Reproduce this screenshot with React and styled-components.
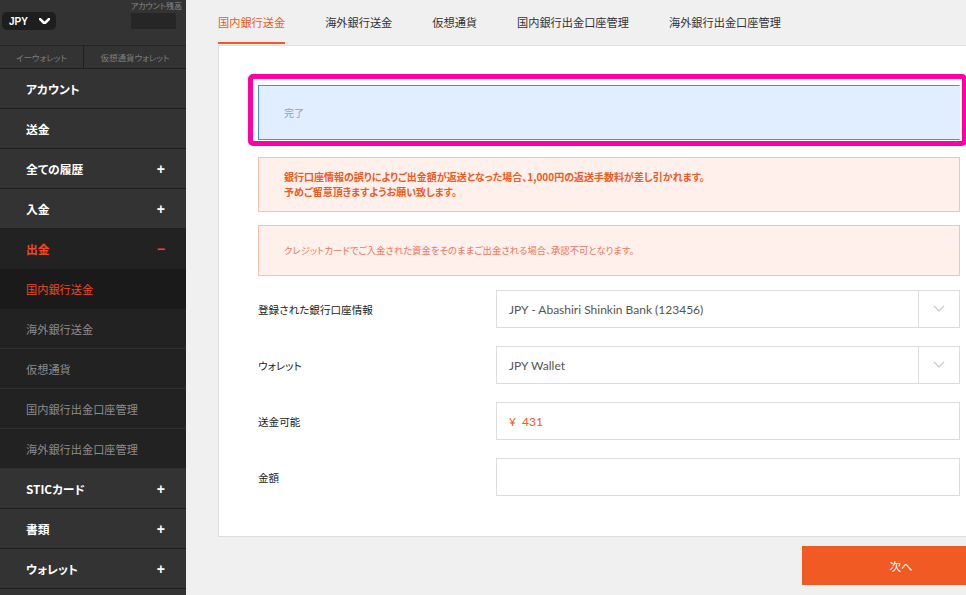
import React from 'react';
import styled, { createGlobalStyle } from 'styled-components';

const GlobalStyle = createGlobalStyle`
	html, body {
		margin: 0;
		padding: 0;
		overflow: hidden;
		background: #f0f0f0;
	}
	body {
		font-family: "Noto Sans CJK JP", "Noto Sans", sans-serif;
		font-feature-settings: "palt";
	}
`;

const menu = [
	{ label: 'アカウント' },
	{ label: '送金' },
	{ label: '全ての履歴', sign: '+' },
	{ label: '入金', sign: '+' },
	{ label: '出金', sign: '−', open: true },
];

const subMenu = [ '国内銀行送金', '海外銀行送金', '仮想通貨', '国内銀行出金口座管理', '海外銀行出金口座管理' ];

const menuBottom = [
	{ label: 'STICカード', sign: '+' },
	{ label: '書類', sign: '+' },
	{ label: 'ウォレット', sign: '+' },
	{ label: '' },
];

const tabs = [ '国内銀行送金', '海外銀行送金', '仮想通貨', '国内銀行出金口座管理', '海外銀行出金口座管理' ];

const Chevron = ({ size = 10, color = '#fff', width = 2 }) => (
	<svg width={size} height={size * 0.6} viewBox="0 0 10 6" fill="none">
		<path d="M1 1l4 4 4-4" stroke={color} strokeWidth={width} strokeLinecap="round" strokeLinejoin="round" />
	</svg>
);

export default function App() {
	return (
		<Page>
			<GlobalStyle />
			<Sidebar>
				<SideTop>
					<CurrencyPill>
						JPY
						<Chevron size={11} width={2.4} />
					</CurrencyPill>
					<Balance>
						<span>アカウント残高</span>
						<BalanceBox />
					</Balance>
				</SideTop>
				<WalletTabs>
					<WalletTab first>イーウォレット</WalletTab>
					<WalletTab>仮想通貨ウォレット</WalletTab>
				</WalletTabs>
				{menu.map((item) => (
					<MenuItem key={item.label} open={item.open}>
						{item.label}
						{item.sign && <Sign open={item.open}>{item.sign}</Sign>}
					</MenuItem>
				))}
				{subMenu.map((label, index) => (
					<SubItem key={label} active={index === 0}>
						{label}
					</SubItem>
				))}
				{menuBottom.map((item, index) => (
					<MenuItem key={index}>
						{item.label}
						{item.sign && <Sign>{item.sign}</Sign>}
					</MenuItem>
				))}
			</Sidebar>

			<Main>
				<TabBar>
					{tabs.map((tab, index) => (
						<Tab key={tab} active={index === 0}>
							{tab}
						</Tab>
					))}
				</TabBar>
				<Card>
					<Highlight>
						<SuccessAlert>完了</SuccessAlert>
					</Highlight>
					<Notice bold>
						銀行口座情報の誤りによりご出金額が返送となった場合、1,000円の返送手数料が差し引かれます。
						<br />
						予めご留意頂きますようお願い致します。
					</Notice>
					<Notice tall>クレジットカードでご入金された資金をそのままご出金される場合、承認不可となります。</Notice>
					<Form>
						<FieldRow>
							<Label>登録された銀行口座情報</Label>
							<Select>
								<span>JPY - Abashiri Shinkin Bank (123456)</span>
								<SelectArrow>
									<Chevron size={12} color="#c8c8c8" width={1} />
								</SelectArrow>
							</Select>
						</FieldRow>
						<FieldRow>
							<Label>ウォレット</Label>
							<Select>
								<span>JPY Wallet</span>
								<SelectArrow>
									<Chevron size={12} color="#c8c8c8" width={1} />
								</SelectArrow>
							</Select>
						</FieldRow>
						<FieldRow>
							<Label>送金可能</Label>
							<Input accent>¥&nbsp;&nbsp;431</Input>
						</FieldRow>
						<FieldRow>
							<Label>金額</Label>
							<Input />
						</FieldRow>
					</Form>
				</Card>
				<Footer>
					<NextButton>次へ</NextButton>
				</Footer>
			</Main>
		</Page>
	);
}

const Page = styled.div`
	display: flex;
	width: 1000px;
	height: 595px;
	background: #f0f0f0;
`;

const Sidebar = styled.aside`
	width: 186px;
	flex-shrink: 0;
	background: #333333;
	display: flex;
	flex-direction: column;
	overflow: hidden;
`;

const SideTop = styled.div`
	height: 46px;
	flex-shrink: 0;
	display: flex;
	justify-content: space-between;
	padding: 0 10px 0 2px;
	box-sizing: border-box;
	border-bottom: 1px solid #262626;
`;

const CurrencyPill = styled.div`
	margin-top: 12px;
	width: 54px;
	height: 18px;
	box-sizing: border-box;
	padding: 0 6px 0 7px;
	border-radius: 5px;
	background: #1e1e1e;
	color: #fff;
	font-family: "Liberation Sans", Arial, sans-serif;
	font-weight: bold;
	font-size: 10px;
	display: flex;
	align-items: center;
	justify-content: space-between;
`;

const Balance = styled.div`
	display: flex;
	flex-direction: column;
	align-items: flex-end;
	span {
		margin-top: 1px;
		font-size: 8px;
		line-height: 10px;
		color: #8a8a8a;
		margin-right: -6px;
	}
`;

const BalanceBox = styled.div`
	margin-top: 2px;
	width: 45px;
	height: 16px;
	background: #262626;
`;

const WalletTabs = styled.div`
	display: flex;
	flex-shrink: 0;
	height: 22px;
	border-bottom: 1px solid #1f1f1f;
`;

const WalletTab = styled.div`
	flex: ${(p) => (p.first ? '0 0 83px' : '1')};
	display: flex;
	align-items: center;
	justify-content: center;
	font-size: 8.5px;
	color: #7f7f7f;
	& + & {
		border-left: 1px solid #1f1f1f;
	}
`;

const MenuItem = styled.div`
	height: 40px;
	flex-shrink: 0;
	box-sizing: border-box;
	display: flex;
	align-items: center;
	justify-content: space-between;
	padding: 0 21px 0 26px;
	background: ${(p) => (p.open ? '#222222' : '#333333')};
	border-bottom: 1px solid ${(p) => (p.open ? '#222222' : '#1f1f1f')};
	color: ${(p) => (p.open ? '#f1481e' : '#ffffff')};
	font-size: 11.8px;
	font-weight: bold;
`;

const Sign = styled.span`
	font-family: "Liberation Sans", Arial, sans-serif;
	font-size: 14px;
	font-weight: bold;
	color: ${(p) => (p.open ? '#f1481e' : '#ffffff')};
`;

const SubItem = styled.div`
	height: 40px;
	flex-shrink: 0;
	box-sizing: border-box;
	display: flex;
	align-items: center;
	padding-left: 26px;
	background: ${(p) => (p.active ? '#1a1a1a' : '#222222')};
	border-bottom: 1px solid ${(p) => (p.active ? '#1a1a1a' : '#2e2e2e')};
	color: ${(p) => (p.active ? '#f1481e' : '#8c8c8c')};
	font-size: 11.2px;
`;

const Main = styled.main`
	flex: 1;
	padding-left: 32px;
	display: flex;
	flex-direction: column;
`;

const TabBar = styled.nav`
	height: 44px;
	flex-shrink: 0;
	display: flex;
	gap: 40px;
`;

const Tab = styled.div`
	height: 44px;
	box-sizing: border-box;
	display: flex;
	align-items: center;
	font-size: 11.2px;
	color: ${(p) => (p.active ? '#f15a22' : '#333333')};
	border-bottom: 2px solid ${(p) => (p.active ? '#f15a22' : 'transparent')};
	padding-top: 2px;
`;

const Card = styled.section`
	margin-top: 1px;
	background: #ffffff;
	border: 1px solid #dedede;
	border-right: none;
	padding: 28px 40px 40px 39px;
	display: flex;
	flex-direction: column;
`;

const Highlight = styled.div`
	margin: 0 -7px 11px -10px;
	border: 5px solid #ff00a6;
	border-radius: 5px;
	padding: 6px 2px 1px 5px;
`;

const SuccessAlert = styled.div`
	height: 55px;
	box-sizing: border-box;
	display: flex;
	align-items: center;
	padding-left: 25px;
	background: #e0eeff;
	border: 1px solid #4a8fdc;
	border-right-color: #e0eeff;
	color: #7f9fe6;
	font-size: 10px;
`;

const Notice = styled.div`
	box-sizing: border-box;
	min-height: ${(p) => (p.tall ? '51px' : '55px')};
	margin-bottom: 13px;
	display: flex;
	align-items: center;
	padding: 0 25px;
	background: #fff0ec;
	border: 1px solid #f8c2ac;
	color: ${(p) => (p.bold ? '#f15a22' : '#f0765a')};
	font-size: ${(p) => (p.bold ? '10px' : '9.4px')};
	font-weight: ${(p) => (p.bold ? 'bold' : 'normal')};
	line-height: 15px;
	${(p) => p.bold && 'display: block; padding-top: 11px;'}
`;

const Form = styled.div`
	margin-top: 1px;
	display: flex;
	flex-direction: column;
	gap: 18px;
`;

const FieldRow = styled.div`
	display: flex;
	align-items: center;
`;

const Label = styled.div`
	width: 238px;
	flex-shrink: 0;
	font-size: 10.6px;
	color: #222222;
`;

const fieldBase = `
	flex: 1;
	height: 38px;
	box-sizing: border-box;
	display: flex;
	align-items: center;
	border: 1px solid #dcdcdc;
	font-family: "Lato", "Open Sans", sans-serif;
	font-size: 12px;
	background: #fff;
`;

const Select = styled.div`
	${fieldBase}
	color: #555555;
	span {
		flex: 1;
		padding-left: 12px;
	}
`;

const SelectArrow = styled.div`
	width: 40px;
	height: 100%;
	border-left: 1px solid #dcdcdc;
	display: flex;
	align-items: center;
	justify-content: center;
`;

const Input = styled.div`
	${fieldBase}
	padding-left: 12px;
	color: ${(p) => (p.accent ? '#f15a22' : '#555')};
`;

const Footer = styled.div`
	display: flex;
	justify-content: flex-end;
	padding-top: 9px;
`;

const NextButton = styled.button`
	width: 198px;
	height: 39px;
	border: none;
	background: #f15a22;
	color: #ffffff;
	font-family: "Noto Sans CJK JP", sans-serif;
	font-size: 11.5px;
	cursor: pointer;
`;
